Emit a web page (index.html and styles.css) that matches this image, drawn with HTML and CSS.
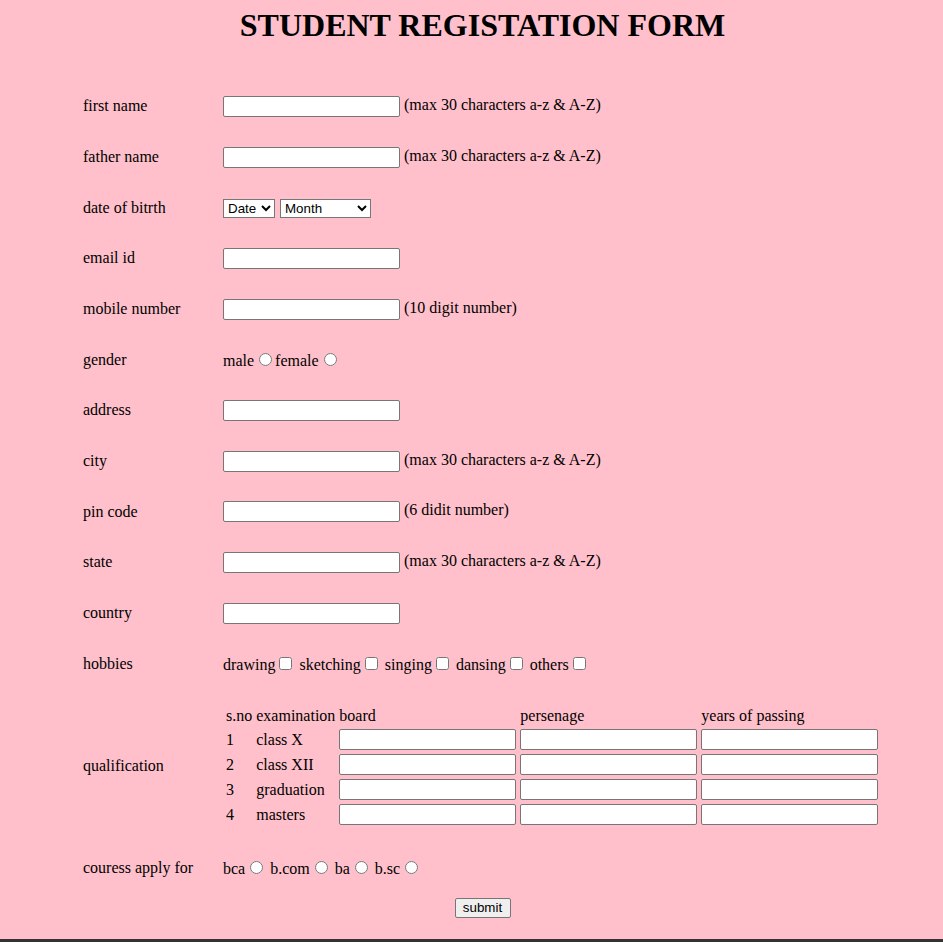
FILE: index.html
```html
<!DOCTYPE html>
<html>
<head>
<meta charset="utf-8">
<title>Student Registation Form</title>
<link rel="stylesheet" href="styles.css">
</head>
<body>
<div class="page">
  <div class="container">
    <h1 class="title">STUDENT REGISTATION FORM</h1>
    <form class="form">
      <div class="row"><div class="label">first name</div><div class="value"><input type="text" class="field"> (max 30 characters a-z &amp; A-Z)</div></div>
      <div class="row"><div class="label">father name</div><div class="value"><input type="text" class="field"> (max 30 characters a-z &amp; A-Z)</div></div>
      <div class="row"><div class="label">date of bitrth</div><div class="value">
        <select class="sel sel-date"><option>Date</option><option>1</option><option>2</option><option>3</option><option>4</option><option>5</option></select><select class="sel sel-month"><option>Month</option><option>Jan</option><option>Feb</option><option>Mar</option></select>
      </div></div>
      <div class="row"><div class="label">email id</div><div class="value"><input type="text" class="field"></div></div>
      <div class="row"><div class="label">mobile number</div><div class="value"><input type="text" class="field"> (10 digit number)</div></div>
      <div class="row"><div class="label">gender</div><div class="value">male<input type="radio" name="g" class="radio">female<input type="radio" name="g" class="radio"></div></div>
      <div class="row"><div class="label">address</div><div class="value"><input type="text" class="field"></div></div>
      <div class="row"><div class="label">city</div><div class="value"><input type="text" class="field"> (max 30 characters a-z &amp; A-Z)</div></div>
      <div class="row"><div class="label">pin code</div><div class="value"><input type="text" class="field"> (6 didit number)</div></div>
      <div class="row"><div class="label">state</div><div class="value"><input type="text" class="field"> (max 30 characters a-z &amp; A-Z)</div></div>
      <div class="row"><div class="label">country</div><div class="value"><input type="text" class="field"></div></div>
      <div class="row"><div class="label">hobbies</div><div class="value">drawing<input type="checkbox" class="check"> sketching<input type="checkbox" class="check"> singing<input type="checkbox" class="check"> dansing<input type="checkbox" class="check"> others<input type="checkbox" class="check"></div></div>
      <div class="row row-qual"><div class="label">qualification</div><div class="value">
        <table class="qual">
          <tr><td>s.no</td><td>examination</td><td>board</td><td>persenage</td><td>years of passing</td></tr>
          <tr><td>1</td><td>class X</td><td><input type="text" class="field cell"></td><td><input type="text" class="field cell"></td><td><input type="text" class="field cell"></td></tr>
          <tr><td>2</td><td>class XII</td><td><input type="text" class="field cell"></td><td><input type="text" class="field cell"></td><td><input type="text" class="field cell"></td></tr>
          <tr><td>3</td><td>graduation</td><td><input type="text" class="field cell"></td><td><input type="text" class="field cell"></td><td><input type="text" class="field cell"></td></tr>
          <tr><td>4</td><td>masters</td><td><input type="text" class="field cell"></td><td><input type="text" class="field cell"></td><td><input type="text" class="field cell"></td></tr>
        </table>
      </div></div>
      <div class="row"><div class="label">couress apply for</div><div class="value">bca<input type="radio" name="c" class="radio"> b.com<input type="radio" name="c" class="radio"> ba<input type="radio" name="c" class="radio"> b.sc<input type="radio" name="c" class="radio"></div></div>
      <div class="submit-row"><button type="button" class="btn">submit</button></div>
    </form>
  </div>
</div>
</body>
</html>
```
FILE: styles.css
```css
html {
  background: #333333;
}
body {
  margin: 0;
  font-family: "Liberation Serif", "Times New Roman", serif;
  font-size: 16px;
  color: #000;
}
.page {
  box-sizing: border-box;
  background: #ffc0cb;
  min-height: 939px;
  padding-top: 7px;
}
.container {
  margin-left: 81px;
  width: 803px;
}
.title {
  margin: 0;
  font-size: 32px;
  line-height: 36px;
  font-weight: bold;
  text-align: center;
}
.form {
  margin: 38.17px 0 0;
  display: flex;
  flex-direction: column;
}
.row {
  display: grid;
  grid-template-columns: 142px 1fr;
  align-items: center;
  height: 50.67px;
}
.row-qual {
  height: auto;
  padding: 15px 0;
}
.label {
  padding-left: 2px;
  line-height: 18px;
}
.value {
  line-height: 18px;
  white-space: nowrap;
}
.field {
  box-sizing: border-box;
  width: 177px;
  height: 21px;
  padding: 1px 2px;
  border: 1px solid #767676;
  border-radius: 2px;
  background: #fff;
  font-family: "Liberation Sans", Arial, sans-serif;
  font-size: 13.33px;
  vertical-align: middle;
  margin: 0;
}
.sel {
  box-sizing: border-box;
  height: 19px;
  border: 1px solid #767676;
  border-radius: 0;
  background: #fff;
  font-family: "Liberation Sans", Arial, sans-serif;
  font-size: 13.33px;
  vertical-align: middle;
  margin: 0;
}
.sel-date {
  width: 52px;
}
.sel-month {
  width: 91px;
  margin-left: 5px;
}
.radio {
  margin: 3px 3px 0 5px;
  width: 13px;
  height: 13px;
}
.check {
  margin: 3px 3px 3px 4px;
  width: 13px;
  height: 13px;
}
.qual {
  border-spacing: 2px;
  margin-left: 0;
  line-height: 18px;
}
.qual td {
  padding: 1px;
  vertical-align: middle;
}
.cell {
  display: block;
}
.submit-row {
  margin-top: 4px;
  text-align: center;
}
.btn {
  box-sizing: border-box;
  width: 56px;
  height: 20px;
  padding: 1px 6px;
  border: 1px solid #767676;
  border-radius: 2px;
  background: #efefef;
  font-family: "Liberation Sans", Arial, sans-serif;
  font-size: 13.33px;
  color: #000;
}
```
